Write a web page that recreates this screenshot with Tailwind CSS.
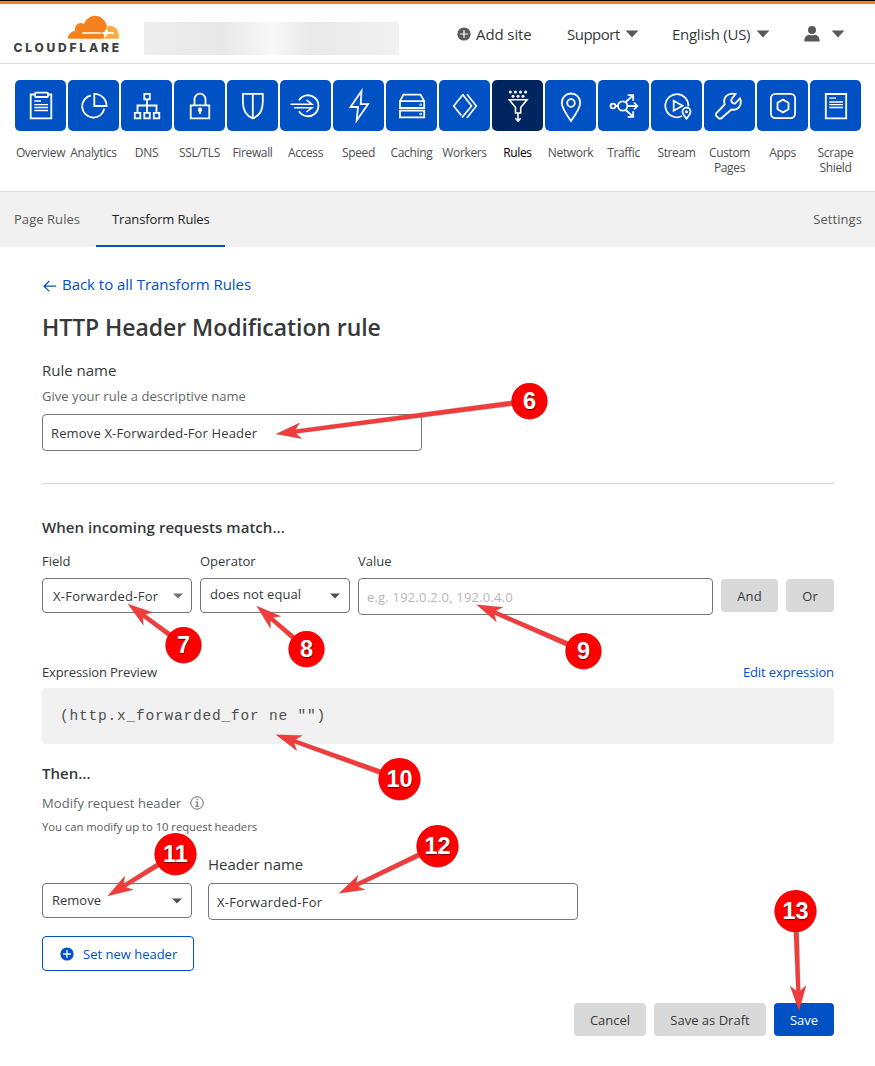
<!DOCTYPE html>
<html lang="en"><head><meta charset="utf-8"><title>Transform Rules</title>
<script src="https://cdn.jsdelivr.net/npm/@tailwindcss/browser@4"></script></head>
<body class="relative w-[875px] h-[1066px] overflow-hidden bg-white font-['Open_Sans','Noto_Sans',sans-serif] text-[#36393a] text-[13px] leading-4 whitespace-nowrap">
<header class="border-t border-black">
<div class="h-[3px] bg-[#f6821f]"></div>
<div class="flex h-[60px] items-center border-b border-[#d9d9d9] pl-3.5">
<svg class="w-[106px] h-[40px]" viewBox="14 13 106 40"><path d="M68 37.800C67.600 34 70.500 30.500 75 30C73.800 25 78.600 20 84 23C88 12 102 11.500 106.500 23.500C107.300 26 106 30 103.500 37.800Z" fill="#f6821f"/><path d="M107.500 25C115 24 119.200 29 119 37.800H103.500Z" fill="#fbad41"/><path d="M82 31H101V33H82Z" fill="#fde0c0"/><path d="M107.500 31.300H114V33H107Z" fill="#fff"/><path d="M106.500 27L107.700 30.500L110.500 32L107 33.500L104.500 37.600L103.800 33.500L101 32L104.500 30.800Z" fill="#fff"/><text x="13.500" y="50.500" font-family="Inter" font-weight="800" font-size="12" textLength="105.500" fill="#404242">CLOUDFLARE</text></svg>
<div class="ml-6 mt-[18px] flex h-[33px] w-[255px] self-start"><div class="w-1/2 bg-linear-to-r from-[#eeeeee] via-[#e8e8e8] via-60% to-[#f8f8f8]"></div><div class="w-1/2 bg-linear-to-r from-[#f8f8f8] via-[#e9e9e9] via-30% to-[#f1f1f1]"></div></div>
<div class="ml-[58px] mt-px flex items-center text-[15px]">
<svg class="w-[14px] h-[14px] mr-[5px]" viewBox="0 0 14 14"><circle cx="7" cy="7" r="6.600" fill="#595959"/><path d="M7 3v8M3 7h8" stroke="#fff" stroke-width="1.200"/></svg>
<span class="w-[55px] tracking-[-0.1px]">Add site</span>
<span class="ml-9 w-[54px] tracking-[-0.5px]">Support</span><svg class="ml-1 w-[14px] h-2" viewBox="0 0 14 8"><path d="M.6.400H13.400L7 7.600z" fill="#595959"/></svg>
<span class="ml-[33px] w-[80px] tracking-[-0.27px]">English (US)</span><svg class="ml-1 w-[14px] h-2" viewBox="0 0 14 8"><path d="M.6.400H13.400L7 7.600z" fill="#595959"/></svg>
<svg class="ml-[34px] w-4 h-4 -mt-px" viewBox="0 0 16 16"><circle cx="8" cy="4" r="4" fill="#595959"/><path d="M.3 15.500C.3 11.500 2 9 5 8.700Q8 10 11 8.700C14 9 15.700 11.500 15.700 15.500z" fill="#595959"/></svg><svg class="ml-[11px] w-[14px] h-2" viewBox="0 0 14 8"><path d="M.6.400H13.400L7 7.600z" fill="#595959"/></svg>
</div>
</div>
</header>

<nav id="nav" class="flex h-[128px] gap-0.5 border-b border-[#d9d9d9] pl-[15px] pt-4 text-[12px] leading-[15px] text-[#4d4f50]"></nav>

<div class="flex h-[55px] bg-[#f1f1f1] text-[#595959]">
<div class="flex w-24 items-center pl-3.5 pb-px tracking-[0.05px]">Page Rules</div>
<div class="flex w-[129px] items-center border-b-2 border-[#0051c3] pl-4 text-[#222] tracking-[-0.13px]">Transform Rules</div>
<div class="ml-auto flex items-center pr-[13px] pb-px tracking-[0.06px]">Settings</div>
</div>

<main class="flex flex-col pl-[42px] w-[834px]">
<a class="mt-[27px] flex h-5 items-center text-[15px] tracking-[-0.03px] text-[#0051c3]"><svg class="mr-[5px] mt-1 w-[15px] h-3" viewBox="0 0 15 12" fill="none" stroke="#0051c3" stroke-width="1.200"><path d="M7.300 1L2 6.200L7.300 11.400M2.300 6.200H14.200"/></svg>Back to all Transform Rules</a>
<h1 class="mt-[17px] h-8 text-[23px] leading-8 font-semibold tracking-[-0.06px]">HTTP Header Modification rule</h1>
<div class="mt-[17px] h-5 text-[15px] leading-5">Rule name</div>
<div class="mt-2 h-4 text-[#62676a] tracking-[0.04px]">Give your rule a descriptive name</div>
<div class="mt-2.5 flex h-[37px] w-[380px] items-center rounded border border-[#75777a] pl-2 tracking-[0.15px]">Remove X-Forwarded-For Header</div>
<div class="mt-8 h-px bg-[#d5d5d5]"></div>
<h2 class="mt-[33px] h-5 text-[15px] leading-5 font-semibold tracking-[0.04px]">When incoming requests match...</h2>
<div class="mt-4 flex h-4"><span class="w-[158px]">Field</span><span class="w-[158px]">Operator</span><span>Value</span></div>
<div class="mt-[9px] flex h-[37px]">
<div class="flex h-[35px] w-[150px] items-center justify-between rounded border border-[#75777a] pl-2.5 pr-2"><span class="tracking-[0.26px]">X-Forwarded-For</span><svg class="w-2.5 h-1.5" viewBox="0 0 10 6"><path d="M0 .5h10L5 5.500z" fill="#6f7173"/></svg></div>
<div class="ml-2 flex h-[35px] w-[150px] items-center justify-between rounded border border-[#75777a] pl-[9px] pr-[9px]"><span class="pb-1 tracking-[0.07px]">does not equal</span><svg class="w-2.5 h-1.5" viewBox="0 0 10 6"><path d="M0 .5h10L5 5.500z" fill="#4d4f50"/></svg></div>
<div class="ml-2 flex h-[37px] w-[355px] items-center rounded border border-[#75777a] pl-2 text-[#b5b7b9] tracking-[0.2px]">e.g. 192.0.2.0, 192.0.4.0</div>
<div class="ml-2 mt-px flex h-[33px] w-[57px] items-center justify-center rounded bg-[#d9d9d9] tracking-[0.2px]">And</div>
<div class="ml-2 mt-px flex h-[33px] w-12 items-center justify-center rounded bg-[#d9d9d9]">Or</div>
</div>
<div class="mt-[49px] flex h-4 justify-between"><span class="tracking-[-0.12px]">Expression Preview</span><a class="text-[#0051c3] tracking-[-0.1px]">Edit expression</a></div>
<div class="mt-2 flex h-14 items-center rounded bg-[#f1f1f1] pl-[18px] font-['Liberation_Mono',monospace] text-[14.5px] tracking-[0.8px] text-[#4d4f50]">(http.x_forwarded_for ne "")</div>
<h2 class="mt-[19px] h-5 text-[15px] leading-5 font-semibold">Then...</h2>
<div class="mt-[11px] flex h-[18px] items-center text-[#62676a]"><span class="w-[139px] tracking-[0.06px]">Modify request header</span><svg class="ml-[9px] w-[14px] h-[14px]" viewBox="0 0 14 14" fill="none" stroke="#62676a"><circle cx="7" cy="7" r="6.200"/><path d="M5.500 6H7.200V10.200M5.200 10.300H9M6.500 3.500H7.700" stroke-width="1.100"/></svg></div>
<div class="mt-[7px] h-4 text-[11.3px] text-[#595959] tracking-[-0.04px]">You can modify up to 10 request headers</div>
<div class="mt-[19px] h-5 pl-[166px] text-[15px] leading-5">Header name</div>
<div class="mt-[9px] flex h-[37px]">
<div class="flex h-[35px] w-[150px] items-center justify-between rounded border border-[#75777a] pl-[9px] pr-[9px]"><span class="pb-0.5">Remove</span><svg class="w-2.5 h-1.5" viewBox="0 0 10 6"><path d="M0 .5h10L5 5.500z" fill="#4d4f50"/></svg></div>
<div class="ml-4 flex h-[37px] w-[370px] items-center rounded border border-[#75777a] pl-2 tracking-[0.26px]">X-Forwarded-For</div>
</div>
<div class="mt-4 flex h-[35px] w-[152px] items-center rounded border border-[#0051c3] pl-[17px] text-[#0051c3]"><svg class="mr-[9px] w-[14px] h-[14px]" viewBox="0 0 14 14"><circle cx="7" cy="7" r="6.600" fill="#0051c3"/><path d="M7 3v8M3 7h8" stroke="#fff" stroke-width="1.300"/></svg>Set new header</div>
<div class="mt-8 flex h-[33px] justify-end gap-2">
<div class="flex w-[72px] items-center justify-center rounded bg-[#d9d9d9]">Cancel</div>
<div class="flex w-28 items-center justify-center rounded bg-[#d9d9d9]">Save as Draft</div>
<div class="flex w-[60px] items-center justify-center rounded bg-[#0051c3] text-white">Save</div>
</div>
</main>

<!-- numbered callouts over the form -->
<svg id="notes" class="absolute inset-0 w-[875px] h-[1066px]" viewBox="0 0 875 1066" font-family="Liberation Sans" font-weight="700" font-size="23.500" text-anchor="middle"></svg>

<script>
const tiles=[
['Overview','<path d="M19.500 14.500H15.700V38.300H36.300V14.500H33"/><rect x="20" y="12.700" width="13" height="4.300" rx="1"/><path stroke-width="1.300" d="M19.300 21H26M19.300 24.700H33M19.300 27.500H33M19.300 30.500H33"/>'],
['Analytics','<path d="M26.300 13.800V26H38.600A12.200 12.200 0 0 0 26.300 13.800zM23 15.400A11.200 11.200 0 1 0 36.300 28.800"/>'],
['DNS','<path d="M23.300 13.800h5.500v5.500h-5.500zM13.800 32.800h5.500v5.500h-5.500zM23.300 32.800h5.500v5.500h-5.500zM32.800 32.800h5.500v5.500h-5.500zM26 19.500V32.500M16.500 32.500V25.500H35.500V32.500"/>'],
['SSL/TLS','<path d="M16.700 25.300H35.300V38.300H16.700zM20.500 25V19.200a5.500 5.500 0 0 1 11 0V25M26 30v4"/><circle cx="26" cy="29.700" r="1.300" fill="#fff"/>'],
['Firewall','<path d="M15.900 13.900H35.800V22C35.800 30 32 36 25.800 38.500C19.700 36 15.900 30 15.900 22zM25.800 14V38"/>'],
['Access','<path d="M19 20.200A10.500 10.500 0 1 1 19 31.300"/><path d="M10.500 24.300H32L26.500 19.800M14 27.700H32L26.500 32" stroke-width="1.500"/>'],
['Speed','<path d="M28.500 11L17.500 27H25L23.700 40.500L35 24.200H27.700z"/>'],
['Caching','<path d="M14 21.200L17.500 14.600H34.500L38.200 21.200M14 21.200H38.200V28H14zM14 30.700H38.200V37.300H14z"/><circle cx="34.700" cy="24.700" r=".4"/><circle cx="34.700" cy="34" r=".4"/>'],
['Workers','<path d="M22.300 35.500L14.700 26L24 14.500M23.500 14.300L32.500 26L23 37.500M28 14.300L37.300 26L28 37.800" stroke-width="1.700"/>'],
['Rules','<path d="M17.300 19.800H35L28.700 27.500V33H23.500V27.500zM26 33V40.500M23.300 38.300L26 41L28.700 38.300" stroke-width="1.600"/><g fill="#fff" stroke="none"><circle cx="18.300" cy="11.900" r="1.500"/><circle cx="23.400" cy="11.900" r="1.500"/><circle cx="28.500" cy="11.900" r="1.500"/><circle cx="33.600" cy="11.900" r="1.500"/><circle cx="21" cy="16.300" r="1.500"/><circle cx="26" cy="16.300" r="1.500"/><circle cx="31" cy="16.300" r="1.500"/></g>'],
['Network','<path d="M26 41C21 34 16.800 28 16.800 22.700a9.200 9.200 0 0 1 18.400 0C35.200 28 31 34 26 41z"/><circle cx="26" cy="23" r="3.800"/>'],
['Traffic','<circle cx="15" cy="26" r="2.400"/><circle cx="24.700" cy="26" r="4.700"/><path d="M17.500 26H20M29.500 26H39M36 22.500L39.300 26L36 29.500M27.700 22L35 15.300M29.700 15.200H35.200V20.700M27.700 30L35 36.700M29.700 36.800H35.200V31.300"/>'],
['Stream','<path d="M31 36A11.500 11.500 0 1 1 37.300 26.500M22.700 20.700V30.700L31.500 25.700z"/><path d="M35.500 38.700C33 35.500 31.500 33.500 31.500 31.700a4 4 0 0 1 8 0C39.500 33.500 38 35.500 35.500 38.700z"/><circle cx="35.500" cy="31.800" r=".6"/>'],
['Custom<br>Pages','<path d="M31.500 14C24 12 18.500 17.500 20.700 24.500L12 33.500V35.700L15 38.500H17L27.500 29.500C34.500 31 38.500 24.500 36 18.300L31 23.600C29 24 27 22 27.300 19.500z"/>'],
['Apps','<rect x="13.900" y="13.900" width="24.200" height="24.200" rx="4.500"/><path d="M26 19.600L31.500 22.800V29.200L26 32.400L20.500 29.200V22.800z"/>'],
['Scrape<br>Shield','<path d="M15.800 14H36.200V38.300H15.800z"/><path stroke-width="1.300" d="M19.300 18.200H26M19.300 22H33M19.300 24.700H33M19.300 27.500H33"/>']];
document.getElementById('nav').innerHTML=tiles.map(([n,d])=>`<div class="flex w-[51px] flex-col items-center text-center ${n==='Rules'?'text-black':''}"><svg class="w-[51px] h-[51px] shrink-0 rounded-[5px] ${n==='Rules'?'bg-[#00255f]':'bg-[#0051c3]'}" viewBox="0 0 51 51" fill="none" stroke="#fff" stroke-width="1.8">${d}</svg><span class="mt-3.5 tracking-[-0.35px]">${n}</span></div>`).join('');
const notes=[[6,276,434,529.5,401],[7,128,604,183.5,645],[8,256.7,606,306.5,649],[9,476.7,604.7,583.5,651],[10,276,734.7,399.5,779],[11,107.7,896,175.5,854],[12,339,893.3,437.5,846],[13,799,1010.7,795.5,911]];
document.getElementById('notes').innerHTML=notes.map(([n,x,y,cx,cy])=>{const a=Math.atan2(cy-y,cx-x)*180/Math.PI,l=Math.hypot(cx-x,cy-y),r=n>9?21.2:18.2;return `<g transform="translate(${x} ${y}) rotate(${a})"><path d="M0 0L25 -8L20 -2L${l} -2.6V2.6L20 2L25 8z" fill="#f23c3c" stroke="#8a4a4a" stroke-opacity=".35" stroke-width=".7"/></g><circle cx="${cx}" cy="${cy+.5}" r="${r}" fill="#777" fill-opacity=".7"/><circle cx="${cx}" cy="${cy}" r="${r-.2}" fill="#fe0000"/><text style="text-shadow:.5px 1px 1px #600" x="${cx}" y="${cy+8.2}" fill="#fff">${n}</text>`}).join('');
</script>
</body></html>
